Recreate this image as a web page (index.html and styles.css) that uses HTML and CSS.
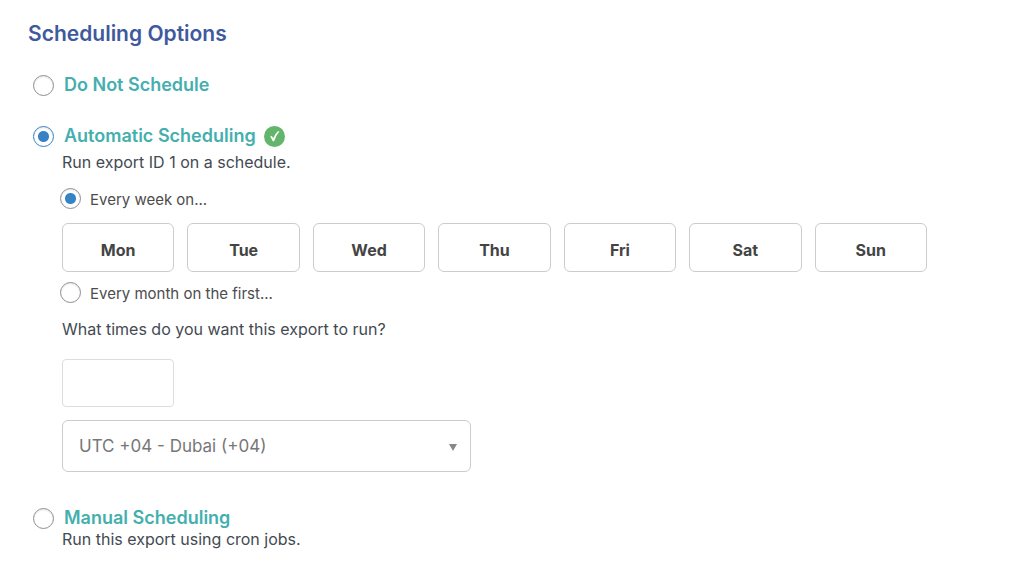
FILE: index.html
```html
<!DOCTYPE html>
<html lang="en">
<head>
<meta charset="utf-8">
<meta name="viewport" content="width=device-width, initial-scale=1">
<title>Scheduling Options</title>
<link rel="stylesheet" href="styles.css">
</head>
<body>
<form class="scheduling">
  <h1 class="title">Scheduling Options</h1>

  <section class="option option-none">
    <div class="option-head">
      <input class="radio" type="radio" name="mode" id="mode-none">
      <label class="option-label" for="mode-none">Do Not Schedule</label>
    </div>
  </section>

  <section class="option option-auto">
    <div class="option-head">
      <input class="radio radio-active" type="radio" name="mode" id="mode-auto" checked>
      <label class="option-label" for="mode-auto">Automatic Scheduling</label>
      <svg class="check" viewBox="0 0 21 21" role="img" aria-label="Connected">
        <circle cx="10.5" cy="10.5" r="10.5" fill="#62b56a"/>
        <path d="M6.2 10.7 L7.5 9.8 Q8.7 11 9.2 12.3 Q11 7.8 13.9 5.3 L15.5 5.2 Q12 9.4 10.1 15.3 L8.7 15.3 Q7.7 12.6 6.2 10.7 Z" fill="#fff"/>
      </svg>
    </div>
    <div class="option-body">
      <p class="text">Run export ID 1 on a schedule.</p>
      <div class="frequency">
        <input class="radio" type="radio" name="frequency" id="weekly" checked>
        <label class="frequency-label" for="weekly">Every week on...</label>
      </div>
      <div class="days">
        <button class="day" type="button">Mon</button>
        <button class="day" type="button">Tue</button>
        <button class="day" type="button">Wed</button>
        <button class="day" type="button">Thu</button>
        <button class="day" type="button">Fri</button>
        <button class="day" type="button">Sat</button>
        <button class="day" type="button">Sun</button>
      </div>
      <div class="frequency frequency-monthly">
        <input class="radio" type="radio" name="frequency" id="monthly">
        <label class="frequency-label" for="monthly">Every month on the first...</label>
      </div>
      <label class="text" for="time">What times do you want this export to run?</label>
      <input class="time" type="text" id="time">
      <div class="zone">
        <select class="zone-select" aria-label="Time zone">
          <option>UTC +04 - Dubai (+04)</option>
        </select>
        <svg class="zone-arrow" viewBox="0 0 8 7" aria-hidden="true"><path d="M0 0H8L4 7Z" fill="#888"/></svg>
      </div>
    </div>
  </section>

  <section class="option option-manual">
    <div class="option-head">
      <input class="radio" type="radio" name="mode" id="mode-manual">
      <label class="option-label" for="mode-manual">Manual Scheduling</label>
    </div>
    <div class="option-body">
      <p class="text">Run this export using cron jobs.</p>
    </div>
  </section>
</form>
</body>
</html>
```
FILE: styles.css
```css
* {
  box-sizing: border-box;
}

body {
  margin: 0;
  background: #fff;
  color: #434a52;
  font-family: Inter, "Liberation Sans", sans-serif;
  font-size: 16px;
  line-height: 20px;
}

.scheduling {
  max-width: 955px;
  padding: 20px 28px;
}

.title {
  margin: 0;
  color: #40599e;
  font-size: 21px;
  font-weight: 600;
  line-height: 28px;
}

.option-none {
  margin-top: 26px;
}

.option-auto {
  margin-top: 29px;
}

.option-manual {
  margin-top: 35px;
}

.option-head {
  display: flex;
  align-items: center;
  height: 22px;
  padding-left: 5px;
}

.option-label {
  margin-left: 10px;
  color: #44afae;
  font-size: 18px;
  font-weight: 600;
}

.check {
  width: 21px;
  height: 21px;
  margin-left: 8px;
}

.radio {
  flex: none;
  appearance: none;
  width: 21px;
  height: 21px;
  margin: 0;
  border: 1px solid #8c8f94;
  border-radius: 50%;
  background: #fff;
  box-shadow: inset 0 1px 2px rgba(0, 0, 0, 0.1);
}

.radio:checked {
  background: radial-gradient(circle, #3582c4 5px, #fff 6px);
}

.radio-active {
  border-color: #3582c4;
}

.option-body {
  padding-left: 34px;
}

.option-auto .option-body {
  padding-top: 5px;
}

.text {
  display: block;
  margin: 0;
}

.frequency {
  display: flex;
  align-items: center;
  height: 22px;
  margin: 15px 0 14px -2px;
}

.frequency-monthly {
  margin-top: 9px;
  margin-bottom: 16px;
}

.frequency-label {
  margin: 4px 0 0 9px;
  color: #4c4c4c;
  font-size: 15px;
}

.days {
  display: grid;
  grid-template-columns: repeat(7, 1fr);
  gap: 13px;
}

.day,
.time,
.zone-select {
  border: 1px solid #ccc;
  border-radius: 6px;
  background: #fff;
  font-family: inherit;
}

.day {
  height: 49px;
  padding: 4px 0 0;
  color: #444;
  font-size: 16px;
  font-weight: 700;
}

.time {
  display: block;
  width: 112px;
  height: 48px;
  margin: 20px 0 13px;
  padding: 0 12px;
  border-color: #ddd;
  border-radius: 4px;
  font-size: 16px;
}

.zone {
  position: relative;
  max-width: 409px;
}

.zone-select {
  display: block;
  appearance: none;
  width: 100%;
  height: 52px;
  padding: 0 32px 0 16px;
  color: #777;
  font-size: 17px;
}

.zone-arrow {
  position: absolute;
  top: 24px;
  right: 14px;
  width: 8px;
  height: 7px;
  pointer-events: none;
}
```
